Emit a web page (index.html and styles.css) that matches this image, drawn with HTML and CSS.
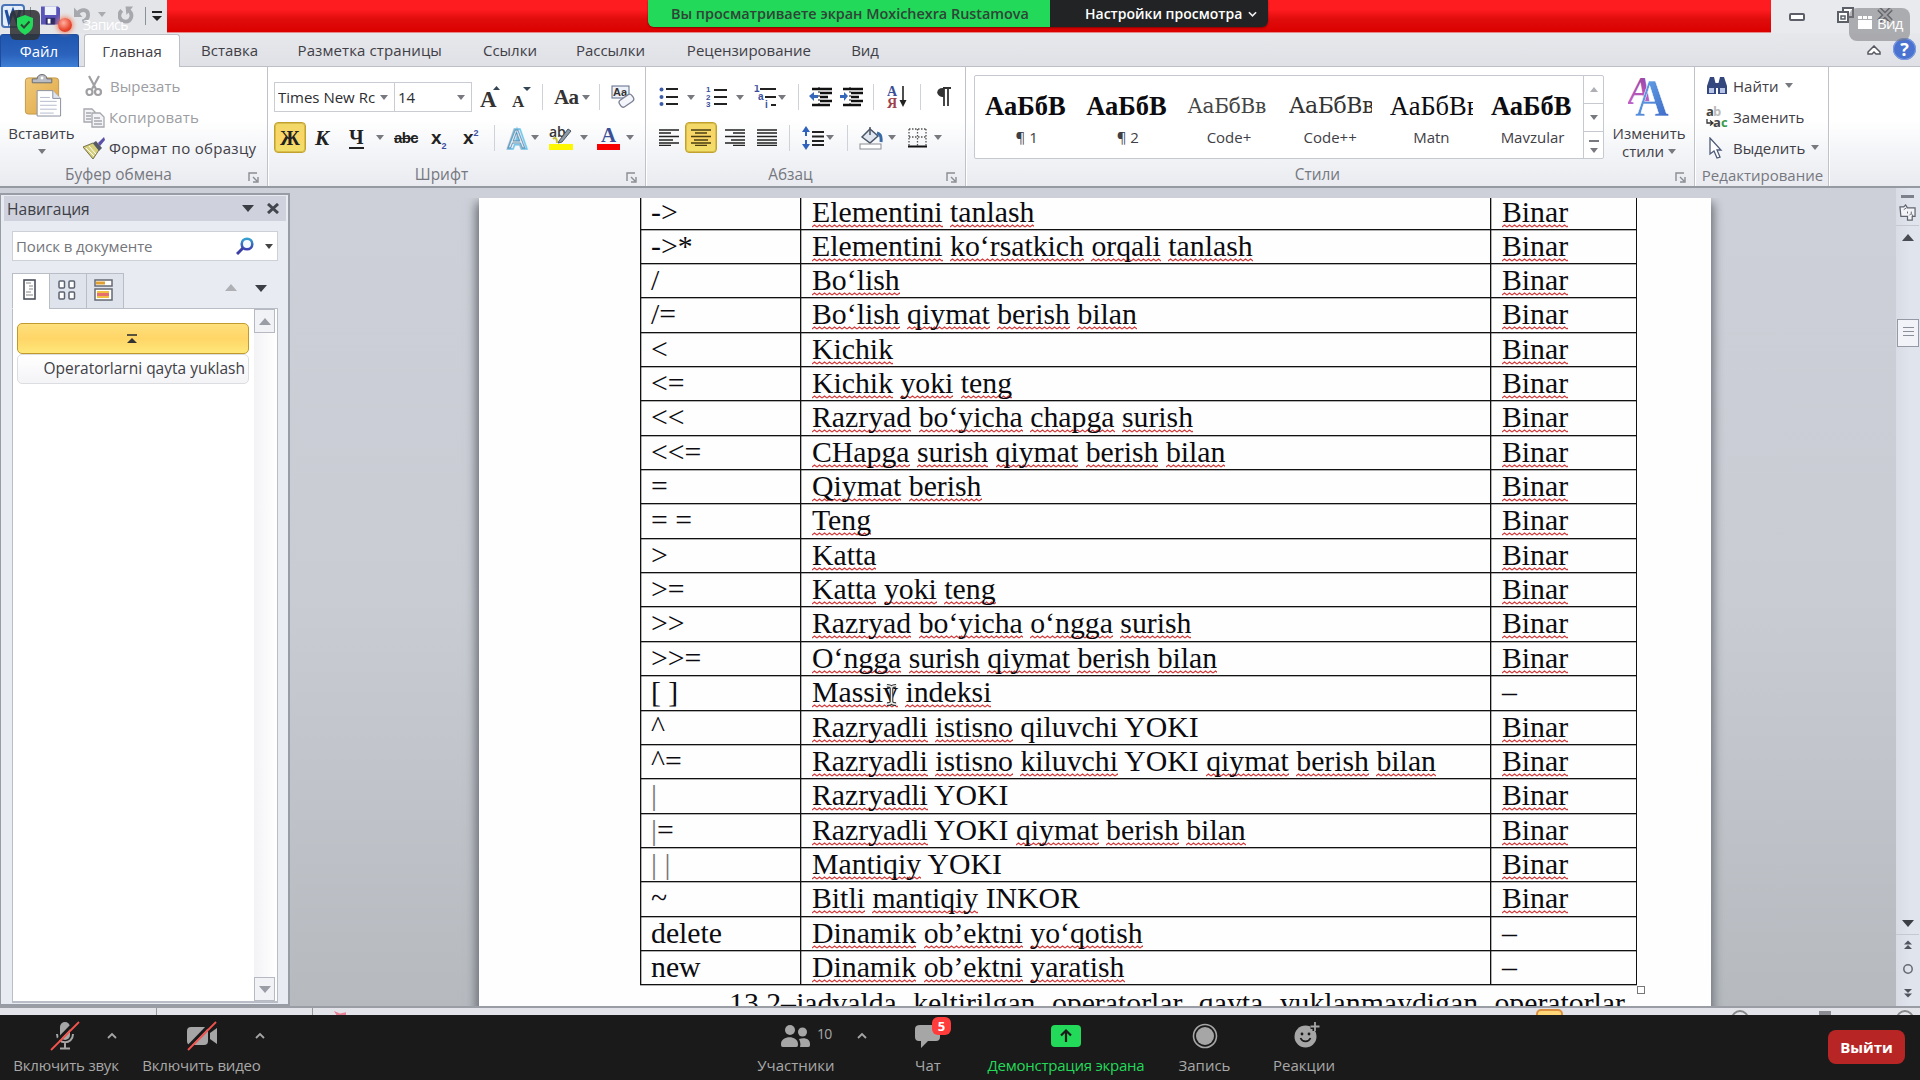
FILE: index.html
```html
<!DOCTYPE html>
<html lang="ru">
<head>
<meta charset="utf-8">
<title>Word</title>
<link rel="stylesheet" href="styles.css">
</head>
<body>
<svg width="0" height="0" class="defs">
  <defs>
    <linearGradient id="gPaste" x1="0" y1="0" x2="1" y2="1"><stop offset="0" stop-color="#f0c878"/><stop offset="1" stop-color="#dfa845"/></linearGradient>
    <linearGradient id="gPurple" x1="0" y1="0" x2="0" y2="1"><stop offset="0" stop-color="#8d3f9c"/><stop offset="1" stop-color="#d06ad0"/></linearGradient>
    <linearGradient id="gBlue" x1="0" y1="0" x2="1" y2="1"><stop offset="0" stop-color="#6db2ee"/><stop offset="1" stop-color="#3a62c4"/></linearGradient>
    <linearGradient id="gLens" x1="0" y1="0" x2="0" y2="1"><stop offset="0" stop-color="#35a0cf"/><stop offset="1" stop-color="#3c3fb0"/></linearGradient>
    <symbol id="launcher" viewBox="0 0 11 11"><path d="M1 9V1h8M10 5v5H5M5 5l4 4" fill="none" stroke="#8a8d94" stroke-width="1.4"/></symbol>
  </defs>
</svg>

<header class="titlebar">
  <div class="qat">
    <svg class="w-icon" viewBox="0 0 24 24"><rect x="1" y="1" width="22" height="22" rx="3" fill="#e6eefa" stroke="#4a74b8" stroke-width="2"/><path d="M5 6l3 12 4-11 4 11 3-12" fill="none" stroke="#1f4fa0" stroke-width="3"/></svg>
    <i class="qsep"></i>
    <svg class="save" viewBox="0 0 20 20"><path d="M0 1h18l2 2v17H0z" fill="#5a55b8"/><rect x="4" y="1" width="12" height="9" fill="#eef2fb"/><rect x="5" y="13" width="10" height="7" fill="#2c2a66"/><rect x="7" y="14" width="3" height="5" fill="#fff"/></svg>
    <svg class="undo" viewBox="0 0 17 18"><path d="M4 7c4-5 11-4 11 2 0 4-3 6-6 7" fill="none" stroke="#a6a8ae" stroke-width="4"/><path d="M0 1v10h9z" fill="#a6a8ae"/></svg>
    <i class="tri pale"></i>
    <svg class="redo" viewBox="0 0 17 18"><path d="M4 4c-5 5-2 12 4 12s9-8 3-12" fill="none" stroke="#a6a8ae" stroke-width="4"/><path d="M8 0h8l-7 9z" fill="#a6a8ae"/></svg>
    <i class="qsep last"></i>
    <svg class="qmore" viewBox="0 0 10 11"><path d="M0 1h10" stroke="#222" stroke-width="2"/><path d="M0 5h10L5 10z" fill="#222"/></svg>
  </div>
  <div class="red"></div>
  <div class="winbtns">
    <svg viewBox="0 0 65 18" width="65" height="18"><g fill="#fff" stroke="#5c5f68" stroke-width="2"><rect x="1" y="8" width="14" height="6" rx="1"/><rect x="54" y="2" width="10" height="9"/><rect x="49" y="6" width="10" height="10"/><rect x="52" y="10" width="4" height="3" stroke-width="1.500"/></g></svg>
    <svg class="close" viewBox="0 0 16 14" width="16" height="14"><path d="M2 1l12 12M14 1L2 13" stroke="#505359" stroke-width="5"/><path d="M2 1l12 12M14 1L2 13" stroke="#d5d6da" stroke-width="2"/></svg>
  </div>
  <div class="shield"><svg viewBox="0 0 18 20" width="18" height="20"><path d="M9 0l8 3v6c0 5-3 8-8 11-5-3-8-6-8-11V3z" fill="#23d959"/><path d="M5 9.500l3 3 5.500-6" fill="none" stroke="#2b4a33" stroke-width="2"/></svg></div>
  <div class="recdot"></div>
  <div class="rectext">Запись</div>
  <div class="share">
    <div class="share-green"><span>Вы просматриваете экран Moxichexra Rustamova</span></div>
    <div class="share-dark"><span>Настройки просмотра</span><svg viewBox="0 0 10 7" width="9" height="7"><path d="M1 1l4 4 4-4" fill="none" stroke="#eee" stroke-width="1.800"/></svg></div>
  </div>
  <div class="viewbtn"><svg viewBox="0 0 14 13" width="14" height="13"><path d="M0 0h4v3H0zM5 0h4v3H5zM10 0h4v3h-4zM0 4h14v9H0z" fill="#fff"/></svg><span>Вид</span></div>
</header>

<nav class="tabs">
  <div class="tab file">Файл</div>
  <div class="tab active">Главная</div>
  <div class="tab t3">Вставка</div>
  <div class="tab t4">Разметка страницы</div>
  <div class="tab t5">Ссылки</div>
  <div class="tab t6">Рассылки</div>
  <div class="tab t7">Рецензирование</div>
  <div class="tab t8">Вид</div>
  <div class="tabs-right">
    <svg viewBox="0 0 14 10" width="14" height="10"><path d="M1 7l6-6 6 6v2H9L7 7 5 9H1z" fill="#fff" stroke="#555860" stroke-width="1.500"/></svg>
    <div class="help">?</div>
  </div>
</nav>

<section class="ribbon">
  <div class="group g-clip">
    <div class="group-body clip">
      <div class="big">
        <svg viewBox="0 0 38 44" width="38" height="43"><rect x="1" y="4" width="34" height="37" rx="3" fill="url(#gPaste)" stroke="#c49a4a"/><path d="M8 9V5h5c0-6 10-6 10 0h5v4z" fill="#b9bcc2" stroke="#6a6d72"/><circle cx="18" cy="4" r="1.500" fill="#fff"/><path d="M13 17h16l8 8v18H13z" fill="#fff" stroke="#8a8fa0"/><path d="M29 17v8h8" fill="#dfe3ee" stroke="#8a8fa0"/><path d="M16 24h10M16 28h17M16 32h17M16 36h17M16 40h14" stroke="#b4bccb"/></svg>
        <span class="lbl-paste">Вставить</span><i class="tri"></i>
      </div>
      <div class="stack">
        <div class="cmd off"><svg viewBox="0 0 22 22" width="22" height="22"><g fill="none" stroke="#a0a0a4" stroke-width="2.200"><path d="M6 1l7 13M16 1L9 14"/><circle cx="6.500" cy="17" r="3"/><circle cx="15" cy="17" r="3"/></g></svg><span class="c1">Вырезать</span></div>
        <div class="cmd off"><svg viewBox="0 0 22 22" width="22" height="22"><g fill="#f4f4f6" stroke="#a6a8ae" stroke-width="1.300"><path d="M1 3h8l3 3v10H1z"/><path d="M9 7h8l4 4v10H9z"/><path d="M3 7h5M3 10h5M3 13h5M11 12h6M11 15h8M11 18h8"/></g></svg><span class="c2">Копировать</span></div>
        <div class="cmd"><svg viewBox="0 0 22 22" width="22" height="22"><path d="M0 10l10-4 6 7-6 9z" fill="#d6cf7c" stroke="#77704a"/><path d="M3 11l8 8M6 9l7 8" stroke="#fff"/><path d="M10 6l3-2 6 7-3 3z" fill="#555a66"/><path d="M15 6l6-6 1 3-5 6z" fill="#5b4fa8"/></svg><span class="c3">Формат по образцу</span></div>
      </div>
    </div>
    <div class="group-title"><span>Буфер обмена</span><svg class="launch"><use href="#launcher"/></svg></div>
  </div>

  <div class="group g-font">
    <div class="group-body">
      <div class="frow1">
        <div class="combo"><span class="tnr">Times New Rc</span><i class="tri"></i></div>
        <div class="combo c14"><span>14</span><i class="tri"></i></div>
        <svg class="grow" viewBox="0 0 22 24" width="22" height="24"><text x="0" y="22" class="serifb" font-size="23">A</text><path d="M13 5l3.500-4L20 5z" fill="#345"/></svg>
        <svg class="grow" viewBox="0 0 20 24" width="20" height="24"><text x="0" y="22" class="serifb" font-size="17">A</text><path d="M11 2h8l-4 4z" fill="#345"/></svg>
        <i class="sep"></i>
        <div class="aa">Aa<i class="tri"></i></div>
        <i class="sep"></i>
        <svg viewBox="0 0 24 24" width="24" height="24"><rect x="1" y="1" width="17" height="12" fill="#eef1f7" stroke="#5c6a88"/><text x="2" y="11" class="sansb" font-size="11">Aa</text><rect x="8" y="12" width="15" height="8" rx="3" transform="rotate(-35 15 16)" fill="#f4f5fa" stroke="#7b8096" stroke-width="1.300"/></svg>
      </div>
      <div class="frow2">
        <div class="hot"><b class="zh">Ж</b></div>
        <b class="glyph it">К</b>
        <b class="glyph un">Ч</b>
        <i class="tri"></i>
        <span class="glyph abc">abc</span>
        <b class="glyph xx">x<sub>2</sub></b>
        <b class="glyph xx">x<sup>2</sup></b>
        <i class="sep"></i>
        <svg viewBox="0 0 24 26" width="24" height="26"><text x="2" y="23" font-size="25" font-family="Liberation Sans" font-weight="700" fill="#fff" stroke="#7cc4e6" stroke-width="3.500" paint-order="stroke">A</text><text x="2" y="23" font-size="25" font-family="Liberation Sans" fill="#fff" stroke="#5a8fb4" stroke-width="1">A</text></svg>
        <i class="tri"></i>
        <svg viewBox="0 0 26 26" width="26" height="26"><text x="1" y="12" font-family="Open Sans" font-weight="600" font-size="14" fill="#333">ab</text><path d="M11 16L20 4l3 2-9 11-4 1z" fill="#8d9ba8" stroke="#4a5560"/><path d="M5 14q4-3 4 4" stroke="#c9c03a" stroke-width="2" fill="none"/><rect x="1" y="19" width="24" height="6" fill="#fdf802"/></svg>
        <i class="tri"></i>
        <svg viewBox="0 0 24 26" width="24" height="26"><text x="4" y="17" font-family="Liberation Serif" font-weight="700" font-size="21" fill="#3b4f96">A</text><rect x="0" y="19" width="23" height="6" fill="#f80000"/></svg>
        <i class="tri"></i>
      </div>
    </div>
    <div class="group-title"><span>Шрифт</span><svg class="launch"><use href="#launcher"/></svg></div>
  </div>

  <div class="group g-para">
    <div class="group-body">
      <div class="prow1">
        <svg viewBox="0 0 20 20" width="20" height="20"><path d="M7 2h12M7 10h12M7 17h12" stroke="#222" stroke-width="1.800"/><g fill="#3a5ba8"><circle cx="2.500" cy="2.500" r="2"/><circle cx="2.500" cy="10" r="2"/><circle cx="2.500" cy="17" r="2"/></g></svg>
        <i class="tri"></i>
        <svg viewBox="0 0 22 22" width="22" height="22"><path d="M8 4h13M8 11h13M8 18h13" stroke="#222" stroke-width="1.800"/><g fill="#3a4f9c" font-size="8" font-weight="700" font-family="Liberation Sans"><text x="0" y="6">1</text><text x="0" y="13.500">2</text><text x="0" y="21">3</text></g></svg>
        <i class="tri"></i>
        <svg viewBox="0 0 24 24" width="24" height="24"><path d="M7 4h16M12 12h11M18 20h5" stroke="#222" stroke-width="1.800"/><g fill="#3a4f9c" font-size="10" font-weight="700" font-family="Liberation Sans"><text x="1" y="7">1</text><text x="5" y="15">a</text><text x="12" y="23">i</text></g></svg>
        <i class="tri"></i>
        <i class="sep"></i>
        <svg viewBox="0 0 23 20" width="23" height="20"><path d="M3 2h20M11 6h12M11 10h8M11 14h12M3 18h18" stroke="#111" stroke-width="2.400"/><path d="M0 9l5-4v3h4v3H5v3z" fill="#3568b8"/><path d="M10 0v20" stroke="#111" stroke-dasharray="2 2"/></svg>
        <svg viewBox="0 0 23 20" width="23" height="20"><path d="M3 2h20M11 6h12M11 10h8M11 14h12M3 18h18" stroke="#111" stroke-width="2.400"/><path d="M8 9L4 5v3H0v3h4v3z" fill="#3568b8"/><path d="M10 0v20" stroke="#111" stroke-dasharray="2 2"/></svg>
        <i class="sep"></i>
        <svg viewBox="0 0 22 24" width="22" height="24"><text x="0" y="11" font-family="Liberation Serif" font-weight="700" font-size="14" fill="#3b4f96">А</text><text x="0" y="23" font-family="Liberation Serif" font-weight="700" font-size="14" fill="#a04048">Я</text><path d="M16 1v19" stroke="#222" stroke-width="1.600"/><path d="M12.500 15h7L16 22z" fill="#222"/></svg>
        <i class="sep"></i>
        <svg viewBox="0 0 15 20" width="15" height="20"><path d="M7 1h8M8 1v18M12 1v18" stroke="#333" stroke-width="1.800"/><path d="M8 1C-1 0-1 10 8 10z" fill="#333"/></svg>
      </div>
      <div class="prow2">
        <svg viewBox="0 0 20 17" width="20" height="17"><path d="M0 1h20M0 4h12M0 7.500h20M0 11h14M0 14h20M0 16.500h12" stroke="#222" stroke-width="1.700"/></svg>
        <div class="hot"><svg viewBox="0 0 20 17" width="20" height="17"><path d="M0 1h20M4 4h12M0 7.500h20M3 11h14M0 14h20M4 16.500h12" stroke="#4a3f10" stroke-width="1.700"/></svg></div>
        <svg viewBox="0 0 20 17" width="20" height="17"><path d="M0 1h20M8 4h12M0 7.500h20M6 11h14M0 14h20M8 16.500h12" stroke="#222" stroke-width="1.700"/></svg>
        <svg viewBox="0 0 20 17" width="20" height="17"><path d="M0 1h20M0 4h20M0 7.500h20M0 11h20M0 14h20M0 16.500h20" stroke="#222" stroke-width="1.700"/></svg>
        <i class="sep"></i>
        <svg viewBox="0 0 22 24" width="22" height="24"><path d="M4 3v7M4 14v7" stroke="#2f62bc" stroke-width="2"/><path d="M0 6l4-6 4 6zM0 18l4 6 4-6z" fill="#2f62bc"/><path d="M10 6h12M10 10.500h12M10 15h12M10 19h12" stroke="#222" stroke-width="1.800"/></svg>
        <i class="tri"></i>
        <i class="sep"></i>
        <svg viewBox="0 0 24 24" width="24" height="24"><path d="M3 11l8-8 8 7-8 7z" fill="#dfe6ef" stroke="#4a5566" stroke-width="1.500"/><path d="M11 9V1" stroke="#4a5566" stroke-width="1.500"/><path d="M18 7q5 1 4 9" stroke="#3a6aa6" stroke-width="3" fill="none"/><rect x="1" y="18" width="21" height="5" fill="#fff" stroke="#8a8d94"/></svg>
        <i class="tri"></i>
        <svg viewBox="0 0 20 20" width="20" height="20"><path d="M1 1h17M1 9h17M1 1v17M9.500 1v17M18 1v17" stroke="#555" stroke-width="1.300" stroke-dasharray="1.500 1.500"/><path d="M0 18.500h19" stroke="#111" stroke-width="2"/></svg>
        <i class="tri"></i>
      </div>
    </div>
    <div class="group-title"><span>Абзац</span><svg class="launch"><use href="#launcher"/></svg></div>
  </div>

  <div class="group g-style">
    <div class="group-body styles">
      <div class="gallery">
        <div class="style"><b class="s1">АаБбВ</b><span>¶ 1</span></div>
        <div class="style"><b class="s1">АаБбВ</b><span>¶ 2</span></div>
        <div class="style"><em class="s3">АаБбВв</em><span>Code+</span></div>
        <div class="style"><em class="s4">АаБбВв</em><span>Code++</span></div>
        <div class="style"><em class="s5">АаБбВв</em><span>Matn</span></div>
        <div class="style"><b class="s1">АаБбВ</b><span>Mavzular</span></div>
        <div class="gscroll"><div><i class="tri up pale"></i></div><div><i class="tri"></i></div><div class="more"><i class="tri"></i></div></div>
      </div>
      <div class="change">
        <svg viewBox="0 0 42 40" width="42" height="40"><text x="0" y="27" font-family="Liberation Serif" font-weight="700" font-style="italic" font-size="40" textLength="25" lengthAdjust="spacingAndGlyphs" fill="url(#gPurple)">A</text><text x="7" y="39" font-family="Liberation Serif" font-weight="700" font-size="52" textLength="34" lengthAdjust="spacingAndGlyphs" fill="url(#gBlue)" stroke="#fff" stroke-width=".5">A</text></svg>
        <span>Изменить</span><span class="l2">стили<i class="tri"></i></span>
      </div>
    </div>
    <div class="group-title"><span>Стили</span><svg class="launch"><use href="#launcher"/></svg></div>
  </div>

  <div class="group g-edit">
    <div class="group-body edit">
      <div class="cmd"><svg viewBox="0 0 22 20" width="22" height="20"><path d="M4 1h4l2 8v9H1v-8zM14 1h4l3 9v8h-9V9z" fill="#34467e"/><path d="M9 7h4v5H9z" fill="#34467e"/><path d="M3 12h5v5H3zM14 12h5v5h-5z" fill="#b9c5e6"/></svg><span class="e1">Найти</span><i class="tri"></i></div>
      <div class="cmd"><svg viewBox="0 0 22 22" width="22" height="22"><g font-family="Open Sans" font-weight="700" font-size="13"><text x="0" y="10" fill="#444">a</text><text x="7" y="10" fill="#bbb">b</text><text x="7" y="21" fill="#444">a</text><text x="15" y="21" fill="#3a9a4a">c</text></g><path d="M1 13v4h5M4 14.500l3 2.500-3 2.500" fill="none" stroke="#333" stroke-width="1.300"/></svg><span class="e2">Заменить</span></div>
      <div class="cmd"><svg viewBox="0 0 22 22" width="22" height="22"><path d="M4 1v16l4-3 3 7 3-1-3-7h4z" fill="#fff" stroke="#4d5a78" stroke-width="1.300"/></svg><span class="e2">Выделить</span><i class="tri"></i></div>
    </div>
    <div class="group-title"><span>Редактирование</span></div>
  </div>
</section>

<main class="workspace">
  <aside class="navpane">
    <div class="nav-head"><span>Навигация</span><i class="tri big-t"></i><svg viewBox="0 0 12 11" width="12" height="11"><path d="M1 1l10 9M11 1L1 10" stroke="#44464e" stroke-width="3"/></svg></div>
    <div class="search"><span>Поиск в документе</span><svg viewBox="0 0 18 18" width="18" height="18"><circle cx="11" cy="7" r="5.300" fill="#f4fafe" stroke="url(#gLens)" stroke-width="2.600"/><path d="M7 11l-6 6" stroke="#3b3fa8" stroke-width="3"/></svg><i class="tri"></i></div>
    <div class="nav-tabs">
      <div class="nt on"><svg viewBox="0 0 14 22" width="14" height="22"><rect x="1" y="1" width="11" height="19" fill="#fff" stroke="#4b505c" stroke-width="1.600"/><path d="M3 4h5M6 7h4M6 10h4M3 13h5M3 16h7" stroke="#888"/></svg></div>
      <div class="nt"><svg viewBox="0 0 18 20" width="18" height="20"><g fill="#fff" stroke="#5c6270" stroke-width="1.500"><rect x="1" y="1" width="5.500" height="7" rx="1"/><rect x="11" y="1" width="5.500" height="7" rx="1"/><rect x="1" y="12" width="5.500" height="7" rx="1"/><rect x="11" y="12" width="5.500" height="7" rx="1"/></g></svg></div>
      <div class="nt"><svg viewBox="0 0 20 22" width="20" height="22"><rect x="1" y="1" width="17" height="6" fill="#fff" stroke="#666a70" stroke-width="1.500"/><path d="M2 4h9" stroke="#e0a030" stroke-width="3"/><rect x="1" y="10" width="17" height="11" fill="#fff" stroke="#666a70" stroke-width="1.500"/><path d="M3 13h12M3 18h12" stroke="#f0c040" stroke-width="2"/><path d="M3 15.500h12" stroke="#e8706c" stroke-width="3"/></svg></div>
      <i class="tri up big-t pale"></i><i class="tri big-t"></i>
    </div>
    <div class="nav-list">
      <div class="items">
        <div class="item sel"><svg viewBox="0 0 10 9" width="10" height="9"><path d="M0 1h10" stroke="#333" stroke-width="1.600"/><path d="M0 9l5-5 5 5z" fill="#333"/></svg></div>
        <div class="item">Operatorlarni qayta yuklash</div>
      </div>
      <div class="nscroll"><div class="sb"><i class="tri up big-t"></i></div><div class="sb"><i class="tri big-t"></i></div></div>
    </div>
  </aside>

  <div class="canvas">
    <article class="page">
      <div class="optable">
        <div>-&gt;</div><div><u>Elementini</u> <u>tanlash</u></div><div><u>Binar</u></div>
        <div>-&gt;*</div><div><u>Elementini</u> <u>ko‘rsatkich</u> <u>orqali</u> <u>tanlash</u></div><div><u>Binar</u></div>
        <div>/</div><div><u>Bo‘lish</u></div><div><u>Binar</u></div>
        <div>/=</div><div><u>Bo‘lish</u> <u>qiymat</u> <u>berish</u> <u>bilan</u></div><div><u>Binar</u></div>
        <div>&lt;</div><div><u>Kichik</u></div><div><u>Binar</u></div>
        <div>&lt;=</div><div><u>Kichik</u> <u>yoki</u> <u>teng</u></div><div><u>Binar</u></div>
        <div>&lt;&lt;</div><div><u>Razryad</u> <u>bo‘yicha</u> <u>chapga</u> <u>surish</u></div><div><u>Binar</u></div>
        <div>&lt;&lt;=</div><div><u>CHapga</u> <u>surish</u> <u>qiymat</u> <u>berish</u> <u>bilan</u></div><div><u>Binar</u></div>
        <div>=</div><div><u>Qiymat</u> <u>berish</u></div><div><u>Binar</u></div>
        <div>= =</div><div><u>Teng</u></div><div><u>Binar</u></div>
        <div>&gt;</div><div><u>Katta</u></div><div><u>Binar</u></div>
        <div>&gt;=</div><div><u>Katta</u> <u>yoki</u> <u>teng</u></div><div><u>Binar</u></div>
        <div>&gt;&gt;</div><div><u>Razryad</u> <u>bo‘yicha</u> <u>o‘ngga</u> <u>surish</u></div><div><u>Binar</u></div>
        <div>&gt;&gt;=</div><div><u>O‘ngga</u> <u>surish</u> <u>qiymat</u> <u>berish</u> <u>bilan</u></div><div><u>Binar</u></div>
        <div>[ ]</div><div><u>Massiv</u> <u>indeksi</u><svg class="ibeam" viewBox="0 0 12 24"><path d="M1 2q4 0 5 2 1-2 5-2M6 4v16M1 22q4 0 5-2 1 2 5 2" fill="none" stroke="#333" stroke-width="4"/><path d="M1 2q4 0 5 2 1-2 5-2M6 4v16M1 22q4 0 5-2 1 2 5 2" fill="none" stroke="#eee" stroke-width="1.600"/></svg></div><div>–</div>
        <div>^</div><div><u>Razryadli</u> <u>istisno</u> qiluvchi YOKI</div><div><u>Binar</u></div>
        <div>^=</div><div><u>Razryadli</u> <u>istisno</u> <u>kiluvchi</u> YOKI <u>qiymat</u> <u>berish</u> <u>bilan</u></div><div><u>Binar</u></div>
        <div><s>|</s></div><div><u>Razryadli</u> YOKI</div><div><u>Binar</u></div>
        <div><s>|</s>=</div><div><u>Razryadli</u> YOKI <u>qiymat</u> <u>berish</u> <u>bilan</u></div><div><u>Binar</u></div>
        <div><s>| |</s></div><div><u>Mantiqiy</u> YOKI</div><div><u>Binar</u></div>
        <div>~</div><div><u>Bitli</u> <u>mantiqiy</u> INKOR</div><div><u>Binar</u></div>
        <div>delete</div><div><u>Dinamik</u> <u>ob’ektni</u> <u>yo‘qotish</u></div><div>–</div>
        <div>new</div><div><u>Dinamik</u> <u>ob’ektni</u> <u>yaratish</u></div><div>–</div>
        <i class="handle"></i>
      </div>
      <p class="para">13.2–jadvalda keltirilgan operatorlar qayta yuklanmaydigan operatorlar</p>
    </article>
  </div>

  <div class="vscroll">
    <i class="split"></i>
    <svg viewBox="0 0 18 18" width="17" height="17"><path d="M1 3h4l2-2 2 3h8v9h-3v4h-5v-4H2z" fill="#f3f4f8" stroke="#60646e" stroke-width="1.300"/><path d="M5 6l3-2M9 8v2M13 8v2M11 12l2-2 2 3" stroke="#60646e" fill="none"/></svg>
    <div class="arr a1"><i class="tri up big-t"></i></div>
    <div class="thumb"></div>
    <div class="arr a2"><i class="tri big-t"></i></div>
    <svg class="v1" viewBox="0 0 8 9" width="8" height="9"><path d="M0 4.500l4-4 4 4zM0 9l4-4 4 4z" fill="#50545e"/></svg>
    <svg class="v2" viewBox="0 0 10 12" width="10" height="12"><circle cx="5" cy="6" r="4.200" fill="none" stroke="#666a74" stroke-width="1.500"/></svg>
    <svg class="v3" viewBox="0 0 8 9" width="8" height="9"><path d="M0 0h8L4 4zM0 4.500h8l-4 4z" fill="#50545e"/></svg>
  </div>
</main>
<div class="status"><i class="st1"></i><i class="st2"></i><i class="st3"></i><i class="st4"></i><i class="st5"></i><i class="st6"></i><i class="st7"></i></div>

<footer class="zoombar">
  <div class="zitem">
    <svg viewBox="0 0 30 32" width="30" height="32"><rect x="10" y="2" width="10" height="18" rx="5" fill="#a6a6a6"/><path d="M7 14c0 11 16 11 16 0M15 22v6M10 28.500h10" fill="none" stroke="#a6a6a6" stroke-width="2"/><path d="M0 28L27 0" stroke="#1a1a1a" stroke-width="3"/><path d="M1 30L29 2" stroke="#f4534e" stroke-width="1.800"/></svg>
    <span class="z1">Включить звук</span><svg class="caret k1" viewBox="0 0 10 7"><path d="M1 6l4-4 4 4" fill="none" stroke="#a6a6a6" stroke-width="1.800"/></svg>
  </div>
  <div class="zitem">
    <svg class="cam" viewBox="0 0 31 32" width="31" height="32"><rect x="0" y="7" width="21" height="18" rx="4" fill="#a6a6a6"/><path d="M23 13l7-5v16l-7-5z" fill="#a6a6a6"/><path d="M0 28L27 0" stroke="#1a1a1a" stroke-width="3"/><path d="M1 30L29 2" stroke="#f4534e" stroke-width="1.800"/></svg>
    <span class="z2">Включить видео</span><svg class="caret k2" viewBox="0 0 10 7"><path d="M1 6l4-4 4 4" fill="none" stroke="#a6a6a6" stroke-width="1.800"/></svg>
  </div>
  <div></div>
  <div class="zitem">
    <svg viewBox="0 0 30 32" width="30" height="32"><g fill="#a6a6a6"><circle cx="9" cy="10" r="5"/><circle cx="21.500" cy="12" r="4.500"/><path d="M0 24c0-9 17-9 17 0 0 3-1 3-3 3H3c-2 0-3 0-3-3zM19 27c1-3 0-6-1-8 6-2 11 0 11 5 0 2 0 3-2 3z"/></g></svg>
    <span>Участники</span><em class="count">10</em><svg class="caret k3" viewBox="0 0 10 7"><path d="M1 6l4-4 4 4" fill="none" stroke="#a6a6a6" stroke-width="1.800"/></svg>
  </div>
  <div></div>
  <div class="zitem">
    <svg viewBox="0 0 26 32" width="26" height="32"><path d="M5 5h16q4 0 4 4v8q0 4-4 4h-8l-7 7v-7H4q-4 0-4-4V9q0-4 5-4z" fill="#a6a6a6"/></svg>
    <span>Чат</span><em class="badge">5</em>
  </div>
  <div class="zitem green">
    <svg viewBox="0 0 30 32" width="30" height="32"><rect x="0" y="5" width="30" height="22" rx="4" fill="#23d959"/><path d="M15 22V11M10 15.500l5-5 5 5" fill="none" stroke="#1a1a1a" stroke-width="2.200"/></svg>
    <span class="z5">Демонстрация экрана</span>
  </div>
  <div class="zitem">
    <svg viewBox="0 0 26 32" width="26" height="32"><circle cx="13" cy="16" r="11.500" fill="none" stroke="#a6a6a6" stroke-width="1.600"/><circle cx="13" cy="16" r="9" fill="#a6a6a6"/></svg>
    <span>Запись</span>
  </div>
  <div class="zitem">
    <svg class="react" viewBox="0 0 26 32" width="26" height="32"><circle cx="11.500" cy="16.500" r="11" fill="#a6a6a6"/><path d="M21 2v9M16.500 6.500h9" stroke="#1a1a1a" stroke-width="5"/><path d="M21 2v9M16.500 6.500h9" stroke="#a6a6a6" stroke-width="1.800"/><circle cx="8" cy="14" r="1.400" fill="#1a1a1a"/><circle cx="15" cy="14" r="1.400" fill="#1a1a1a"/><path d="M6.500 18c2 4.500 8 4.500 10 0" fill="none" stroke="#1a1a1a" stroke-width="1.700"/></svg>
    <span>Реакции</span>
  </div>
  <div></div>
  <button class="leave">Выйти</button>
</footer>
</body>
</html>
```

FILE: styles.css
```css
* { box-sizing: border-box; }
html, body { margin: 0; width: 1920px; height: 1080px; overflow: hidden; }
body { font: 15px/20px "Open Sans", "Noto Sans", sans-serif; color: #3f4046; display: flex; flex-direction: column; background: #1a1a1a; }
svg { display: block; flex: none; }
i { font-style: normal; }
.defs { position: absolute; }

.tri { display: block; width: 0; height: 0; border: 4.500px solid transparent; border-top: 5.500px solid #77797f; border-bottom: 0; flex: none; }
.tri.up { border-bottom: 5.500px solid #77797f; border-top: 0; }
.tri.big-t { border-width: 7px 6.500px 0; border-top-color: #3c3e45; }
.tri.up.big-t { border-width: 0 6.500px 7px; border-bottom-color: #4a4c54; }
.tri.pale { border-top-color: #a8abb0; }
.tri.up.pale { border-bottom-color: #aeb0b5; }

/* Title bar */
.titlebar { height: 33px; display: grid; grid-template-columns: 167px 1604px 149px; position: relative; background: #e6e7eb; flex: none; z-index: 2; }
.red { background: linear-gradient(#ff1c20 0 30%, #e00c0c 60%, #db0000); border-bottom: 1px solid #e58a8a; }
.qat { display: flex; align-items: flex-start; padding-left: 1px; background: #e4e5e9; }
.w-icon { width: 24px; height: 24px; margin-top: 4px; }
.qsep { width: 1px; height: 16px; background: #8d9097; margin: 7px 10px 0 5px; }
.save { width: 19px; height: 20px; margin-top: 5px; }
.undo { width: 16px; height: 18px; margin: 6px 8px 0 14px; }
.qat .tri { margin-top: 12px; }
.redo { width: 16px; height: 18px; margin: 6px 0 0 12px; }
.qsep.last { margin: 7px 6px 0 11px; height: 18px; }
.qmore { width: 10px; height: 11px; margin-top: 11px; }
.winbtns { display: flex; padding: 6px 0 0 18px; background: #e9eaee; }
.winbtns .close { margin: 2px 0 0 23px; }
.shield { position: absolute; left: 10px; top: 10px; width: 30px; height: 30px; border-radius: 6px; background: rgba(48,50,52,.88); display: grid; place-items: center; }
.recdot { position: absolute; left: 58px; top: 18px; width: 14px; height: 14px; border-radius: 50%; background: radial-gradient(circle at 40% 35%, #ffb0a0, #e8442c 60%, #c8301c); box-shadow: 0 0 5px 1px #f08060; }
.rectext { position: absolute; left: 83px; top: 15px; color: #fff; font-size: 14px; letter-spacing: -.6px; }
.share { position: absolute; left: 648px; top: 0; width: 620px; height: 27px; display: grid; grid-template-columns: 402px 218px; font: 600 14px/24px "Open Sans", sans-serif; border-radius: 0 0 6px 6px; overflow: hidden; white-space: nowrap; box-shadow: 0 1px 2px rgba(0,0,0,.4); }
.share-green { background: #23d959; color: #2f4436; padding-left: 23px; padding-top: 2px; font-size: 14.400px; }
.share-dark { background: #222325; color: #fff; padding: 2px 0 0 35px; display: flex; }
.share-dark svg { margin: 9px 0 0 6px; }
.viewbtn { position: absolute; left: 1849px; top: 8px; width: 61px; height: 33px; border-radius: 8px; background: rgba(120,121,124,.55); color: #fff; display: flex; align-items: center; padding: 0 0 4px 9px; gap: 5px; font-size: 15px; letter-spacing: -.8px; }

/* Tab strip */
.tabs { height: 34px; background: linear-gradient(#e7e8ec, #dfe1e6); border-bottom: 1px solid #bcbfc6; display: grid; grid-template-columns: 84px 96px 78px 184px 95px 108px 166px 68px 1fr; align-items: stretch; flex: none; line-height: 34px; white-space: nowrap; }
.tab { text-align: right; }
.tab.t4 { letter-spacing: .1px; }
.tab.file { width: 79px; margin-top: 1px; text-align: center; color: #fff; background: linear-gradient(#1f57b0, #2a62bc 60%, #3f7fd6); border: 1px solid #1f4c9c; border-bottom: 0; border-radius: 3px 3px 0 0; line-height: 32px; padding-right: 1px; }
.tab.active { background: #fff; text-align: center; border: 1px solid #bcbfc6; border-bottom: 0; border-radius: 3px 3px 0 0; margin: 1px 0 -1px; line-height: 32px; }
.tabs-right { display: flex; justify-content: flex-end; padding: 5px 4px 0 0; gap: 12px; }
.tabs-right svg { margin-top: 7px; }
.help { width: 23px; height: 22px; border-radius: 50%; background: #4a72d0; color: #fff; font: 700 18px/22px "Open Sans"; text-align: center; box-shadow: 0 0 0 1px #7f9be0 inset; }

/* Ribbon */
.ribbon { height: 121px; flex: none; display: grid; grid-template-columns: 268px 378px 320px 729px 134px 1fr; background: linear-gradient(#fff 0 45%, #f4f5f8 70%, #e9ebf0); border-bottom: 2px solid #9599a1; }
.group { border-right: 1px solid #bfc2c9; display: flex; flex-direction: column; box-shadow: 1px 0 #fff; min-width: 0; }
.group-body { height: 98px; position: relative; }
.group-title { position: relative; height: 21px; text-align: center; color: #76787f; font-size: 15.400px; line-height: 20px; padding-right: 30px; }
.g-style .group-title { padding-right: 25px; }
.launch { position: absolute; right: 8px; top: 7px; width: 11px; height: 11px; }
.clip { display: flex; }
.big { width: 83px; display: flex; flex-direction: column; align-items: center; padding-top: 7px; }
.big .lbl-paste { margin-top: 6px; }
.big .tri { margin-top: 6px; }
.big svg { margin-left: 2px; }
.stack { padding-top: 3px; }
.cmd { height: 31px; display: flex; align-items: center; gap: 4px; white-space: nowrap; }
.cmd.off { color: #9b9da2; }
.cmd .tri { margin-left: 1px; }
.c1 { margin-left: 1px; }
.c2 { letter-spacing: .2px; }
.c3 { letter-spacing: .3px; }
.g-font .group-body, .g-para .group-body { padding: 15px 0 0 6px; }
.g-para .group-body { padding-left: 13px; }
.frow1, .frow2, .prow1, .prow2 { display: grid; height: 30px; align-items: center; justify-items: start; }
.frow2, .prow2 { margin-top: 10px; }
.frow1 { grid-template-columns: 120px 86px 32px 30px 12px 45px 12px 30px; }
.frow2 { grid-template-columns: 41px 34px 27px 18px 37px 32px 31px 12px 25px 17px 32px 17px 29px 10px; }
.prow1 { grid-template-columns: 28px 19px 30px 17px 25px 20px 11px 31px 33px 14px 33px 16px 16px; }
.prow2 { grid-template-columns: 26px 40px 32px 32px 13px 24px 21px 12px 29px 20px 26px 10px; }
.combo { width: 121px; height: 30px; border: 1px solid #c9ccd2; background: #fff; display: flex; align-items: center; padding: 0 6px 0 3px; justify-content: space-between; white-space: nowrap; color: #2c2d31; }
.combo .tnr { overflow: hidden; width: 98px; }
.c14 { width: 78px; }
.sep { width: 1px; height: 26px; background: #cfd2d8; }
.serifb { font-family: "Liberation Serif"; font-weight: 700; fill: #333; }
.sansb { font-family: "Liberation Sans"; font-weight: 700; fill: #333; }
.aa { font: 700 21px/24px "Liberation Serif", serif; color: #333; display: flex; align-items: center; letter-spacing: -.6px; gap: 4px; }
.hot { width: 32px; height: 31px; border: 1px solid #c2a22c; border-radius: 4px; background: linear-gradient(#f0d968, #fbd567 50%, #efe069); display: grid; place-items: center; box-shadow: 0 0 0 1px #d8bd4c inset; }
.zh { font: 700 20px/22px "Liberation Serif"; color: #222; }
.glyph { color: #222; white-space: nowrap; }
.it { font: italic 700 21px/24px "Liberation Serif"; }
.un { font: 700 20px/20px "Liberation Serif"; border-bottom: 2px solid #222; }
.abc { font: 700 15px/20px "Liberation Sans"; text-decoration: line-through; letter-spacing: -.6px; }
.xx { font: 700 19px/20px "Liberation Sans"; }
.xx sub, .xx sup { font-size: 9px; color: #3a4fa0; line-height: 0; }
.xx sup { vertical-align: 8px; }
.styles { display: flex; padding: 8px 0 0 8px; }
.gallery { width: 631px; height: 84px; border: 1px solid #c6c9d0; background: #fff; display: grid; grid-template-columns: 1px repeat(6, 101.200px) 20px; border-radius: 2px; }
.gallery .style:first-child { grid-column: 2; }
.style { display: flex; flex-direction: column; align-items: center; height: 82px; padding-top: 17px; }
.style b, .style em { width: 83px; height: 27px; overflow: hidden; white-space: nowrap; font-style: normal; color: #0c0c10; }
.style span { margin-top: 7px; }
.s1 { font: 700 26.500px/26px "Liberation Serif"; }
.style .s3 { font: 20px/26px "DejaVu Serif"; color: #444; letter-spacing: -.2px; }
.style .s4 { font: 22px/26px "DejaVu Serif"; color: #333; letter-spacing: -.4px; }
.style .s5 { font: 26.500px/26px "Liberation Serif"; }
.gscroll { border-left: 1px solid #c6c9d0; display: grid; grid-template-rows: 28px 28px 26px; width: 20px; }
.gscroll div { display: grid; place-items: center; border-bottom: 1px solid #c6c9d0; }
.gscroll .more { border-bottom: 0; }
.gscroll .more::before { content: ""; width: 10px; height: 2px; background: #77797f; margin-bottom: -8px; }
.change { width: 90px; display: flex; flex-direction: column; align-items: center; padding: 2px 0 0; line-height: 18px; }
.change span { margin-top: 7px; }
.change .l2 { margin-top: 0; display: flex; align-items: center; gap: 4px; }
.edit { padding: 3px 0 0 11px; }
.edit .cmd { gap: 5px; }
.g-edit .group-title { padding: 0 0 0 2px; font-size: 15px; }

/* Workspace */
.workspace { height: 818px; flex: none; display: grid; grid-template-columns: 290px 1606px 24px; background: linear-gradient(#cdd0d8, #c9ccd3 50%, #b6babf); overflow: hidden; }
.navpane { margin-top: 5px; height: 813px; border: 2px solid #989ca5; border-left-width: 1px; background: #e8ebf1; padding: 1px 2px 0 3px; display: flex; flex-direction: column; }
.nav-head { height: 25px; background: #cfd2dc; display: flex; align-items: center; padding: 0 7px 0 3px; }
.nav-head span { flex: 1; color: #3e4048; font-size: 15.600px; }
.nav-head .tri { margin-right: 13px; }
.search { height: 30px; width: 266px; margin: 10px 0 0 8px; border: 1px solid #cdd0d7; background: #fff; display: flex; align-items: center; padding: 0 4px 0 3px; color: #74767c; }
.search span { flex: 1; letter-spacing: -.1px; }
.search .tri { margin-left: 11px; border-width: 5px 4px 0; border-top-color: #444; }
.nav-tabs { height: 35px; width: 266px; margin: 12px 0 0 8px; display: flex; align-items: flex-start; }
.nt { width: 37px; height: 36px; border: 1px solid #b9bdc6; border-right-width: 0; background: #dfe3ec; display: grid; place-items: center; }
.nt svg { margin-left: -2px; margin-top: -2px; }
.nt.on { background: #fff; border-bottom-color: #fff; z-index: 1; }
.nt:nth-child(3) { width: 38px; border-right-width: 1px; }
.nav-tabs .tri { margin: 11px 18px 0 101px; }
.nav-tabs .tri + .tri { margin: 12px 0 0 0; }
.nav-list { height: 695px; width: 266px; margin-left: 8px; border: 1px solid #b9bdc6; border-bottom-width: 2px; background: #fff; display: flex; justify-content: space-between; }
.items { padding: 14px 0 0 4px; }
.item { width: 232px; height: 30px; border: 1px solid #dcdde1; border-radius: 5px; background: linear-gradient(#fff, #f4f4f7); text-align: right; padding-right: 3px; line-height: 27px; font-size: 15.500px; white-space: nowrap; }
.item.sel { height: 31px; border: 1px solid #c09a2c; background: linear-gradient(#fee07c, #ffd567 50%, #ffe77a); display: grid; place-items: center; }
.nscroll { width: 23px; padding-right: 2px; display: flex; flex-direction: column; justify-content: space-between; background: linear-gradient(90deg, #f3f3f6, #fff); }
.sb { height: 24px; border: 1px solid #b6b9c2; background: #f1f2f6; display: grid; place-items: center; }
.sb .tri.big-t { border-top-color: #9a9da5; border-bottom-color: #9a9da5; }

.canvas { padding: 10px 0 0 189px; overflow: hidden; }
.page { width: 1232px; height: 900px; background: #fefefe; box-shadow: -3px 5px 10px #6f737b, 3px 5px 9px #7f838b; padding: 0 74px 0 161px; clip-path: inset(0 -20px 0 -20px); font: 29.780px/32px "Liberation Serif", serif; color: #0b0b10; }
.optable { position: relative; display: grid; grid-template-columns: 160px 690px 147px; grid-template-rows: 31.700px; grid-auto-rows: 34.350px; width: 997px; border-right: 1px solid #111; white-space: pre; }
.optable > div { position: relative; border-left: 1px solid #111; border-bottom: 1px solid #111; box-shadow: 0 1px rgba(0,0,0,.3), inset 1px 0 rgba(0,0,0,.3); padding-left: 11px; line-height: 32px; }
.optable > div:nth-child(3n+1) { padding-left: 10px; }
.optable > div:nth-child(-n+3) { line-height: 27px; height: 31.700px; }
.optable u { text-decoration: none; background: url("data:image/svg+xml,%3Csvg xmlns='http://www.w3.org/2000/svg' width='5' height='4'%3E%3Cpath d='M0 3L2.500 1L5 3' fill='none' stroke='%23d43a3a' stroke-width='1.100'/%3E%3C/svg%3E") repeat-x 0 100%; }
.optable s { text-decoration: none; color: #777; }
.handle { position: absolute; right: -9px; bottom: -9px; width: 8px; height: 8px; border: 1px solid #777; background: #fff; }
.ibeam { position: absolute; left: 85px; top: 7px; width: 11px; height: 24px; }
.para { margin: 2px 12px 0 89px; text-align-last: justify; white-space: nowrap; }

.vscroll { background: linear-gradient(90deg, #d9dce4, #e0e4ed 60%); display: flex; flex-direction: column; align-items: center; padding-right: 1px; }
.split { width: 13px; height: 3px; background: #7c808a; margin: 7px 0 6px; }
.arr { display: grid; place-items: center; width: 23px; height: 23px; }
.a1 { border-top: 1px solid #c5c8d0; margin-top: 4px; }
.thumb { width: 22px; height: 28px; margin-top: 71px; border: 1px solid #9599a4; background: repeating-linear-gradient(#8a8e98 0 1px, transparent 1px 4px) 5px 7px / 11px 12px no-repeat, #f2f3f8; }
.a2 { margin-top: 565px; border-bottom: 1px solid #c5c8d0; }
.v1 { margin-top: 5px; }
.v2 { margin-top: 14px; }
.v3 { margin-top: 14px; }

.status { height: 9px; margin-bottom: 0; flex: none; background: #e2e4ea; border-top: 2px solid #9a9da4; overflow: hidden; display: grid; grid-template-columns: 156px 156px 22px 1202px 195px 88px 86px; }
.status > i { grid-row: 1; }
.st1 { grid-column: 2; border-left: 1px solid #999; }
.st2 { grid-column: 3; border-left: 1px solid #999; }
.st3 { grid-column: 4; width: 12px; height: 4px; margin-top: 3px; background: #ea8095; clip-path: polygon(0 0, 50% 60%, 100% 30%, 100% 100%, 20% 100%); }
.st4 { grid-column: 5; width: 27px; height: 12px; margin-top: 1px; border: 2px solid #dc9040; border-radius: 5px; background: #ffd778; }
.st5 { grid-column: 6; width: 18px; height: 18px; margin-top: 2px; border: 2px solid #888; border-radius: 50%; }
.st6 { grid-column: 7; width: 12px; height: 4px; margin-top: 3px; background: #8a8c92; }
.st7 { grid-column: 7; width: 18px; height: 18px; margin: 2px 0 0 77px; border: 2px solid #888; border-radius: 50%; }

/* Meeting toolbar */
.zoombar { height: 66px; flex: none; background: #1a1a1a; display: grid; grid-template-columns: 130px 143px 469px 108px 24px 108px 168px 109px 90px 479px 77px; color: #a8a8a8; }
.zitem { position: relative; display: flex; flex-direction: column; align-items: center; padding-top: 5px; white-space: nowrap; }
.zitem span { margin-top: 3px; line-height: 20px; }
.zitem.green { color: #23d959; }
.z1 { letter-spacing: -.2px; margin-left: 2px; }
.z2 { letter-spacing: -.2px; }
.z5 { letter-spacing: -.25px; }
.cam { margin-left: 2px; }
.react { margin-left: 5px; }
.caret { position: absolute; width: 10px; height: 7px; top: 17px; }
.k1 { left: 107px; }
.k2 { left: 125px; }
.k3 { left: 115px; }
.count { position: absolute; left: 75px; top: 9px; font-style: normal; font-size: 14px; letter-spacing: -.8px; }
.badge { position: absolute; left: 58px; top: 2px; width: 19px; height: 18px; border-radius: 6px; background: #ff3b3b; color: #fff; font: 700 13px/18px "Open Sans"; text-align: center; }
.leave { height: 34px; margin-top: 15px; border: 0; border-radius: 8px; background: #b82525; color: #fff; font: 700 15px/32px "Open Sans"; padding: 0; }
```
